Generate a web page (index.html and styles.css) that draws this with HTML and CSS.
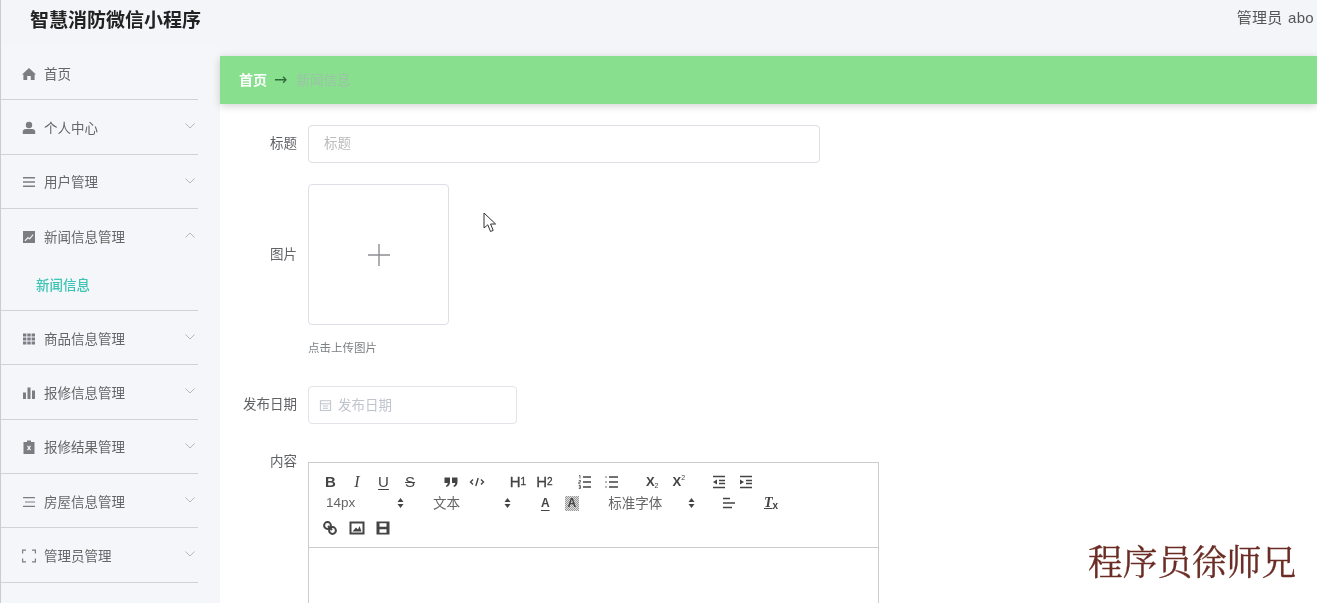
FILE: index.html
```html
<!DOCTYPE html>
<html lang="en">
<head>
    <meta charset="UTF-8">
    <meta name="viewport" content="width=device-width, initial-scale=1.0">
    <title>智慧消防微信小程序</title>
    <link rel="stylesheet" href="styles.css">
</head>
<body>

    <div class="page">
        <header class="topbar">
            <div class="brand">智慧消防微信小程序</div>
            <div class="user-info">管理员 abo</div>
        </header>

        <div class="layout">
            <aside class="sidebar">
                <ul class="menu">
                    <li class="menu-item">
                        <svg class="menu-icon" viewBox="0 0 14 14"><path d="M7 1 L14 7.5 L12.6 7.5 L12.6 13 L8.8 13 L8.8 9 L5.2 9 L5.2 13 L1.4 13 L1.4 7.5 L0 7.5 Z"/></svg>
                        <span>首页</span>
                    </li>
                    <li class="menu-item">
                        <svg class="menu-icon" viewBox="0 0 14 14"><circle cx="7" cy="4" r="3.2"/><path d="M0.8 13 V10.6 C0.8 8.8 2.4 8 4 8 H10 C11.6 8 13.2 8.8 13.2 10.6 V13 Z"/></svg>
                        <span>个人中心</span>
                        <svg class="chevron" viewBox="0 0 10 6"><path d="M0.5 0.5 L5 5 L9.5 0.5"/></svg>
                    </li>
                    <li class="menu-item">
                        <svg class="menu-icon" viewBox="0 0 14 14"><path d="M1 2 H13 V3.4 H1 Z M1 6.3 H13 V7.7 H1 Z M1 10.6 H13 V12 H1 Z"/></svg>
                        <span>用户管理</span>
                        <svg class="chevron" viewBox="0 0 10 6"><path d="M0.5 0.5 L5 5 L9.5 0.5"/></svg>
                    </li>
                    <li class="menu-item open">
                        <svg class="menu-icon" viewBox="0 0 14 14"><path fill-rule="evenodd" d="M1 1 H13 V13 H1 Z M2.5 10.5 L3.4 11.3 L6 8.4 L7.8 9.6 L11.6 5 L10.8 4.3 L7.6 8.1 L5.8 6.9 Z"/></svg>
                        <span>新闻信息管理</span>
                        <svg class="chevron" viewBox="0 0 10 6"><path d="M0.5 5.5 L5 1 L9.5 5.5"/></svg>
                    </li>
                    <li class="submenu-item">新闻信息</li>
                    <li class="menu-item">
                        <svg class="menu-icon" viewBox="0 0 14 14"><path d="M1 1.5 H4.4 V4.5 H1 Z M5.3 1.5 H8.7 V4.5 H5.3 Z M9.6 1.5 H13 V4.5 H9.6 Z M1 5.5 H4.4 V8.5 H1 Z M5.3 5.5 H8.7 V8.5 H5.3 Z M9.6 5.5 H13 V8.5 H9.6 Z M1 9.5 H4.4 V12.5 H1 Z M5.3 9.5 H8.7 V12.5 H5.3 Z M9.6 9.5 H13 V12.5 H9.6 Z"/></svg>
                        <span>商品信息管理</span>
                        <svg class="chevron" viewBox="0 0 10 6"><path d="M0.5 0.5 L5 5 L9.5 0.5"/></svg>
                    </li>
                    <li class="menu-item">
                        <svg class="menu-icon" viewBox="0 0 14 14"><path d="M1 6.5 H4 V13 H1 Z M5.5 1.5 H8.5 V13 H5.5 Z M10 4.5 H13 V13 H10 Z"/></svg>
                        <span>报修信息管理</span>
                        <svg class="chevron" viewBox="0 0 10 6"><path d="M0.5 0.5 L5 5 L9.5 0.5"/></svg>
                    </li>
                    <li class="menu-item">
                        <svg class="menu-icon" viewBox="0 0 14 14"><path fill-rule="evenodd" d="M5 0.5 H9 V2 H12.5 V14 H1.5 V2 H5 Z M5 6.2 L6.3 8 L5 9.8 L6 10.5 L7 9 L8 10.5 L9 9.8 L7.7 8 L9 6.2 L8 5.5 L7 7 L6 5.5 Z"/></svg>
                        <span>报修结果管理</span>
                        <svg class="chevron" viewBox="0 0 10 6"><path d="M0.5 0.5 L5 5 L9.5 0.5"/></svg>
                    </li>
                    <li class="menu-item">
                        <svg class="menu-icon" viewBox="0 0 14 14"><path d="M1 2 H13 V3.2 H1 Z M3 6.4 H13 V7.6 H3 Z M1 10.8 H13 V12 H1 Z"/></svg>
                        <span>房屋信息管理</span>
                        <svg class="chevron" viewBox="0 0 10 6"><path d="M0.5 0.5 L5 5 L9.5 0.5"/></svg>
                    </li>
                    <li class="menu-item">
                        <svg class="menu-icon" viewBox="0 0 14 14"><path d="M0 0.5 H4 V1.7 H1.2 V4.5 H0 Z M10 0.5 H14 V4.5 H12.8 V1.7 H10 Z M0 9.5 H1.2 V12.3 H4 V13.5 H0 Z M12.8 9.5 H14 V13.5 H10 V12.3 H12.8 Z"/></svg>
                        <span>管理员管理</span>
                        <svg class="chevron" viewBox="0 0 10 6"><path d="M0.5 0.5 L5 5 L9.5 0.5"/></svg>
                    </li>
                </ul>
            </aside>

            <main class="content">
                <div class="breadcrumb">
                    <span class="crumb-home">首页</span>
                    <span class="crumb-sep">→</span>
                    <span class="crumb-current">新闻信息</span>
                </div>

                <form class="form">
                    <div class="form-row">
                        <label class="form-label">标题</label>
                        <div class="text-input">标题</div>
                    </div>

                    <div class="form-row center">
                        <label class="form-label">图片</label>
                        <div class="upload-box">
                            <svg class="upload-plus" viewBox="0 0 24 24"><path d="M12 1 V23 M1 12 H23"/></svg>
                        </div>
                    </div>
                    <div class="upload-tip">点击上传图片</div>

                    <div class="form-row">
                        <label class="form-label">发布日期</label>
                        <div class="date-input">
                            <svg class="date-icon" viewBox="0 0 14 14"><path d="M1.5 2 H12.5 V12.5 H1.5 Z M1.5 5 H12.5 M4 7.5 H10 M4 10 H10"/></svg>
                            <span class="date-text">发布日期</span>
                        </div>
                    </div>

                    <div class="form-row editor-row">
                        <label class="form-label">内容</label>
                        <div class="editor">
                            <div class="toolbar">
                                <div class="tool-row first">
                                    <div class="tool-group">
                                        <span class="tool tool-bold">B</span>
                                        <span class="tool tool-italic">I</span>
                                        <span class="tool tool-under">U</span>
                                        <span class="tool tool-strike">S</span>
                                    </div>
                                    <div class="tool-group">
                                        <span class="tool"><svg viewBox="0 0 18 18" class="fill-icon"><path d="M2.5 4.5 H8 V9 C8 11.5 7 13 4.5 14 L3.8 12.8 C5 12.2 5.6 11.3 5.7 10 H2.5 Z M10 4.5 H15.5 V9 C15.5 11.5 14.5 13 12 14 L11.3 12.8 C12.5 12.2 13.1 11.3 13.2 10 H10 Z"/></svg></span>
                                        <span class="tool"><svg viewBox="0 0 18 18" class="line-icon"><path d="M5 6.5 L2.5 9 L5 11.5 M13 6.5 L15.5 9 L13 11.5 M10.2 5 L7.8 13"/></svg></span>
                                    </div>
                                    <div class="tool-group">
                                        <span class="tool tool-head">H<sub>1</sub></span>
                                        <span class="tool tool-head">H<sub>2</sub></span>
                                    </div>
                                    <div class="tool-group">
                                        <span class="tool"><svg viewBox="0 0 18 18" class="line-icon"><path d="M7 4 H15 M7 9 H15 M7 14 H15"/><path class="thin" d="M3 2.5 H4 V5.5 M2.8 7.5 H4.4 V9.2 H2.8 V10.8 H4.4 M2.8 12.5 H4.4 V15.5 H2.8 M2.8 14 H4.4"/></svg></span>
                                        <span class="tool"><svg viewBox="0 0 18 18" class="line-icon"><path d="M6 4 H15 M6 9 H15 M6 14 H15 M2.5 4 H3.5 M2.5 9 H3.5 M2.5 14 H3.5"/></svg></span>
                                    </div>
                                    <div class="tool-group">
                                        <span class="tool tool-script">x<sub>2</sub></span>
                                        <span class="tool tool-script">x<sup>2</sup></span>
                                    </div>
                                    <div class="tool-group">
                                        <span class="tool"><svg viewBox="0 0 18 18" class="line-icon"><path d="M3 3.5 H15 M9 7.5 H15 M9 10.5 H15 M3 14.5 H15"/><path class="solid" d="M7 6.5 V11.5 L3 9 Z"/></svg></span>
                                        <span class="tool"><svg viewBox="0 0 18 18" class="line-icon"><path d="M3 3.5 H15 M9 7.5 H15 M9 10.5 H15 M3 14.5 H15"/><path class="solid" d="M3 6.5 V11.5 L7 9 Z"/></svg></span>
                                    </div>
                                </div>

                                <div class="tool-row second">
                                    <div class="picker picker-size">
                                        <span class="picker-latin">14px</span>
                                        <svg class="picker-arrows" viewBox="0 0 8 12"><path d="M4 1 L7 5 H1 Z M4 11 L1 7 H7 Z"/></svg>
                                    </div>
                                    <div class="picker picker-head">
                                        <span>文本</span>
                                        <svg class="picker-arrows" viewBox="0 0 8 12"><path d="M4 1 L7 5 H1 Z M4 11 L1 7 H7 Z"/></svg>
                                    </div>
                                    <span class="tool tool-color">A</span>
                                    <span class="tool tool-bg"><span>A</span></span>
                                    <div class="picker picker-font">
                                        <span>标准字体</span>
                                        <svg class="picker-arrows" viewBox="0 0 8 12"><path d="M4 1 L7 5 H1 Z M4 11 L1 7 H7 Z"/></svg>
                                    </div>
                                    <span class="tool"><svg viewBox="0 0 18 18" class="line-icon"><path d="M3 4.5 H10 M3 9 H15 M3 13.5 H12"/></svg></span>
                                    <span class="tool tool-clean"><span class="clean-t">T</span><sub>x</sub></span>
                                </div>

                                <div class="tool-row third">
                                    <span class="tool"><svg viewBox="0 0 18 18" class="line-icon thick"><circle cx="6.5" cy="6.5" r="3.4"/><circle cx="11.5" cy="11.5" r="3.4"/><path d="M7 7 L11 11"/></svg></span>
                                    <span class="tool"><svg viewBox="0 0 18 18" class="line-icon thick"><path d="M2.5 3.5 H15.5 V14.5 H2.5 Z"/><path class="solid" d="M4.5 12.5 L8 8.5 L10 10.5 L11.5 7 L13.5 12.5 Z"/></svg></span>
                                    <span class="tool"><svg viewBox="0 0 18 18" class="fill-icon"><path fill-rule="evenodd" d="M2.5 2.5 H15.5 V15.5 H2.5 Z M5.5 4.3 V7.8 H12.5 V4.3 Z M5.5 10.2 V13.7 H12.5 V10.2 Z"/></svg></span>
                                </div>
                            </div>
                            <div class="editor-body"></div>
                        </div>
                    </div>
                </form>
            </main>
        </div>

        <svg class="cursor" viewBox="0 0 15 21"><path d="M1 1 V16 L4.8 12.8 L7.5 19.5 L10.2 18.4 L7.6 12 L12.6 12 Z"/></svg>
        <div class="watermark">程序员徐师兄</div>
    </div>

</body>
</html>
```

FILE: styles.css
```css
html, body {
    margin: 0;
    height: 100%;
    overflow: hidden;
}
body {
    font-family: "Liberation Sans", "Noto Sans CJK SC", sans-serif;
    font-size: 14px;
    color: #606266;
    background-color: #fff;
}
.page {
    position: relative;
    height: 603px;
    overflow: hidden;
    background-color: #f4f5f9;
    border-left: 1px solid #ccc;
    filter: blur(0.45px);
}

/* header */
.topbar {
    display: flex;
    justify-content: space-between;
    align-items: flex-start;
    height: 47px;
    padding-left: 29px;
    padding-right: 3px;
}
.brand {
    margin-top: 8px;
    font-size: 19px;
    line-height: 26px;
    font-weight: bold;
    color: #222;
}
.user-info {
    margin-top: 8px;
    line-height: 20px;
    font-size: 15px;
    letter-spacing: 0.3px;
    word-spacing: 1px;
    color: #555;
    white-space: nowrap;
}

.layout {
    display: flex;
}

/* sidebar */
.sidebar {
    flex: 0 0 219px;
    background-color: #f5f6fa;
    margin-top: -1px;
}
.menu {
    list-style: none;
    margin: 0;
    padding: 0;
    width: 197px;
}
.menu-item {
    display: flex;
    align-items: center;
    box-sizing: border-box;
    position: relative;
    height: 54.3px;
    padding-left: 21px;
    font-size: 13.5px;
    border-bottom: 1px solid #d0d2d6;
    color: #666;
}
.menu-item.open {
    border-bottom: none;
}
.menu-icon {
    flex-shrink: 0;
    width: 14px;
    height: 14px;
    margin-top: 2px;
    margin-right: 8px;
    fill: #7b7d82;
}
.chevron {
    position: absolute;
    right: 3px;
    top: 23px;
    width: 10px;
    height: 6px;
    fill: none;
    stroke: #b4b7bc;
    stroke-width: 1;
}
.submenu-item {
    box-sizing: border-box;
    height: 48px;
    padding-left: 35px;
    padding-top: 13px;
    line-height: 20px;
    font-size: 13.5px;
    font-weight: 500;
    color: #3cc4b4;
    border-bottom: 1px solid #d0d2d6;
}

/* main */
.content {
    flex: 1;
    min-width: 0;
    margin-top: -1px;
    padding-top: 10px;
}
.breadcrumb {
    position: relative;
    display: flex;
    align-items: center;
    box-sizing: border-box;
    height: 48px;
    padding-left: 19px;
    padding-bottom: 2px;
    background-color: #88df8e;
    box-shadow: 0 2px 8px rgba(0, 0, 0, 0.18);
}
.crumb-home {
    font-weight: bold;
    color: #fff;
}
.crumb-sep {
    margin: 0 9px 0 7px;
    font-family: "DejaVu Sans", sans-serif;
    font-size: 16px;
    color: #2f6b3a;
}
.crumb-current {
    font-size: 13.5px;
    color: #9cc3a8;
}
.form {
    height: 500px;
    padding-top: 21px;
    background-color: #fff;
}
.form-row {
    display: flex;
    align-items: center;
    margin-bottom: 21px;
}
.form-label {
    width: 77px;
    margin-right: 11px;
    text-align: right;
    font-size: 13.5px;
    line-height: 20px;
    color: #606266;
}
.text-input {
    box-sizing: border-box;
    width: 512px;
    height: 38px;
    line-height: 36px;
    padding-left: 15px;
    border: 1px solid #dcdfe6;
    border-radius: 4px;
    font-size: 13.5px;
    color: #bbb;
}
.upload-box {
    display: flex;
    align-items: center;
    justify-content: center;
    box-sizing: border-box;
    width: 141px;
    height: 141px;
    border: 1px solid #dcdfe6;
    border-radius: 4px;
}
.upload-plus {
    width: 24px;
    height: 24px;
    fill: none;
    stroke: #8c8f94;
    stroke-width: 1.4;
}
.upload-tip {
    margin: -6px 0 30px 88px;
    line-height: 16px;
    font-size: 11.5px;
    color: #7d8084;
}
.date-input {
    display: flex;
    align-items: center;
    box-sizing: border-box;
    width: 209px;
    height: 38px;
    padding-left: 10px;
    border: 1px solid #e2e4ea;
    border-radius: 4px;
    background-color: #fff;
    font-size: 13.5px;
    color: #c0c4cc;
}
.date-icon {
    width: 13px;
    height: 13px;
    margin-right: 6px;
    fill: none;
    stroke: #c0c4cc;
    stroke-width: 1.1;
}
.date-text {
    margin-top: -3px;
}

/* editor */
.editor-row {
    align-items: flex-start;
    margin-top: 28px;
}
.editor {
    box-sizing: border-box;
    width: 571px;
    margin-top: 10px;
    border: 1px solid #ccc;
}
.toolbar {
    padding: 7px 8px;
    border-bottom: 1px solid #ccc;
}
.tool-row {
    display: flex;
    align-items: center;
    color: #444;
}
.tool-row.first, .tool-row.third {
    height: 24px;
}
.tool-row.second {
    height: 18px;
    margin-bottom: 4px;
}
.tool-group {
    display: flex;
    margin-right: 14px;
}
.tool {
    display: flex;
    align-items: center;
    justify-content: center;
    flex: 0 0 26.6px;
    height: 18px;
    font-size: 15px;
    line-height: 18px;
    color: #444;
}
.tool svg {
    width: 18px;
    height: 18px;
}
.line-icon {
    fill: none;
    stroke: #444;
    stroke-width: 1.4;
}
.line-icon.thick {
    stroke-width: 2;
}
.line-icon .thin {
    stroke-width: 0.8;
}
.line-icon .solid, .fill-icon {
    fill: #444;
}
.line-icon .solid {
    stroke: none;
}
.tool-bold {
    font-weight: bold;
}
.tool-italic {
    font-family: "Liberation Serif", serif;
    font-style: italic;
    font-size: 16px;
}
.tool-under {
    text-decoration: underline;
    text-underline-offset: 2px;
}
.tool-strike {
    text-decoration: line-through;
}
.tool-head {
    font-size: 15px;
    font-weight: 500;
    -webkit-text-stroke: 0.3px #444;
}
.tool-head sub {
    font-size: 10px;
    line-height: 0;
    vertical-align: -2px;
}
.tool-script {
    font-weight: bold;
    font-size: 13px;
    text-transform: uppercase;
}
.tool-script sub, .tool-script sup {
    align-self: flex-end;
    font-size: 7px;
    line-height: 10px;
    font-weight: normal;
}
.tool-script sup {
    align-self: flex-start;
}
.picker {
    display: flex;
    align-items: center;
    justify-content: space-between;
    box-sizing: border-box;
    height: 18px;
    padding-left: 9px;
    padding-right: 10px;
    font-size: 13.5px;
    color: #666;
}
.picker span {
    margin-top: -2px;
}
.picker-latin {
    font-size: 13.5px;
}
.picker-arrows {
    width: 9px;
    height: 12px;
    fill: #444;
}
.picker-size {
    width: 98px;
    margin-right: 9px;
}
.picker-head {
    width: 98px;
    margin-right: 10px;
}
.picker-font {
    width: 107px;
    margin-left: 14px;
    margin-right: 10px;
}
.tool-color {
    font-weight: bold;
    font-size: 12px;
    text-decoration: underline;
    text-underline-offset: 3px;
}
.tool-bg span {
    width: 14px;
    height: 15px;
    line-height: 15px;
    text-align: center;
    font-size: 12px;
    font-weight: bold;
    background: repeating-conic-gradient(#999 0 25%, #e0e0e0 0 50%) 0 0 / 2px 2px;
}
.tool-clean {
    margin-left: 15px;
    font-family: "Liberation Serif", serif;
    font-style: italic;
    font-weight: bold;
    font-size: 14px;
}
.clean-t {
    text-decoration: underline;
}
.tool-clean sub {
    align-self: flex-end;
    font-family: "Liberation Sans", sans-serif;
    font-style: normal;
    font-size: 10px;
    line-height: 12px;
}
.editor-body {
    height: 200px;
}

/* things over the page */
.cursor {
    position: absolute;
    left: 482px;
    top: 212px;
    width: 15px;
    height: 21px;
    fill: #fff;
    stroke: #333;
    stroke-width: 1;
}
.watermark {
    position: absolute;
    left: 1087px;
    top: 542px;
    font-family: "Liberation Serif", "Noto Serif CJK SC", "Noto Sans CJK SC", serif;
    font-size: 34.7px;
    line-height: 44px;
    white-space: nowrap;
    color: #6a2c24;
    -webkit-text-stroke: 0.3px #6a2c24;
}
```
